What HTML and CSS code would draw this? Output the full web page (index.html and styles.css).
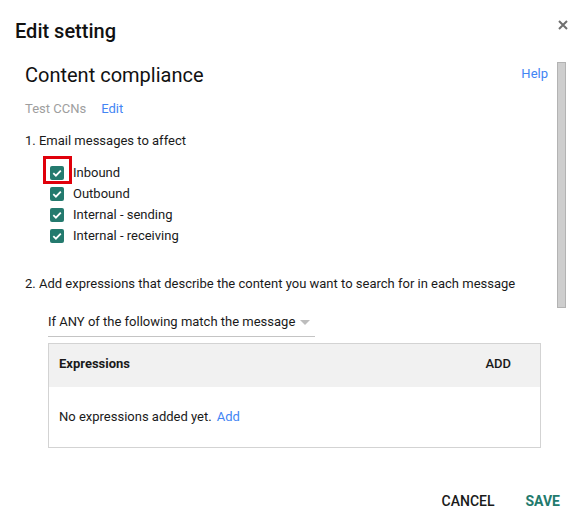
FILE: index.html
```html
<!DOCTYPE html>
<html>
<head>
<meta charset="utf-8">
<link rel="stylesheet" href="styles.css">
</head>
<body>
<div class="dialog">
  <div class="dlg-head">
    <h1 class="dlg-title">Edit setting</h1>
    <svg class="close" width="10" height="10" viewBox="0 0 10 10"><path d="M1 1 L9 9 M9 1 L1 9" stroke="#6f6f6f" stroke-width="2" fill="none"/></svg>
  </div>
  <div class="dlg-body">
    <div class="main">
      <div class="title-row">
        <h2 class="sub-title">Content compliance</h2>
        <a class="link help">Help</a>
      </div>
      <div class="meta"><span class="muted">Test CCNs</span><a class="link">Edit</a></div>
      <div class="section">1. Email messages to affect</div>
      <ul class="checks">
        <li class="check-row"><span class="cb highlighted"><svg width="14" height="14" viewBox="0 0 14 14"><path d="M3.3 7.2 L5.9 9.7 L10.8 4.6" stroke="#fff" stroke-width="1.8" fill="none"/></svg></span>Inbound</li>
        <li class="check-row"><span class="cb"><svg width="14" height="14" viewBox="0 0 14 14"><path d="M3.3 7.2 L5.9 9.7 L10.8 4.6" stroke="#fff" stroke-width="1.8" fill="none"/></svg></span>Outbound</li>
        <li class="check-row"><span class="cb"><svg width="14" height="14" viewBox="0 0 14 14"><path d="M3.3 7.2 L5.9 9.7 L10.8 4.6" stroke="#fff" stroke-width="1.8" fill="none"/></svg></span>Internal - sending</li>
        <li class="check-row"><span class="cb"><svg width="14" height="14" viewBox="0 0 14 14"><path d="M3.3 7.2 L5.9 9.7 L10.8 4.6" stroke="#fff" stroke-width="1.8" fill="none"/></svg></span>Internal - receiving</li>
      </ul>
      <div class="section second">2. Add expressions that describe the content you want to search for in each message</div>
      <div class="select"><span>If ANY of the following match the message</span><svg class="caret" width="10" height="5" viewBox="0 0 10 5"><path d="M0 0 L10 0 L5 5 Z" fill="#bdbdbd"/></svg></div>
      <div class="table">
        <div class="table-head"><span class="th">Expressions</span><span class="add-btn">ADD</span></div>
        <div class="table-body">No expressions added yet.<a class="link add-link">Add</a></div>
      </div>
    </div>
    <div class="thumb"></div>
  </div>
  <div class="dlg-foot">
    <span class="btn">CANCEL</span>
    <span class="btn primary">SAVE</span>
  </div>
</div>
</body>
</html>
```

FILE: styles.css
```css
*, *::before, *::after { box-sizing: border-box; }
html, body { margin: 0; padding: 0; background: #fff; }
body { font-family: Roboto, "Liberation Sans", Arial, sans-serif; color: #1a1a1a; }
.dialog { width: 584px; height: 520px; display: flex; flex-direction: column; background: #fff; }
.dlg-head { display: flex; justify-content: space-between; align-items: flex-start; padding: 19px 16px 0 15px; }
.dlg-title { margin: 0; font-size: 20px; line-height: 24px; font-weight: 500; color: #111; }
.close { margin-top: 1px; display: block; }
.dlg-body { display: flex; margin-top: 20px; margin-right: 18px; }
.main { flex: 1; padding: 0 9px 0 25px; min-width: 0; }
.thumb { width: 9px; height: 246px; margin-top: -1px; background: #cecece; border: 1px solid #b3b3b3; flex-shrink: 0; }
.title-row { display: flex; justify-content: space-between; align-items: flex-start; }
.sub-title { margin: 0; font-size: 20px; line-height: 24px; font-weight: 400; color: #111; }
.link { color: #4285f4; font-size: 13px; line-height: 20px; text-decoration: none; cursor: pointer; }
.help { margin-top: 1px; }
.meta { margin-top: 12px; font-size: 13px; line-height: 20px; display: flex; gap: 15px; }
.muted { color: #9e9e9e; }
.section { margin-top: 12px; font-size: 13px; line-height: 20px; }
.section.second { margin-top: 28px; }
.checks { list-style: none; margin: 11px 0 0 25px; padding: 0; }
.check-row { display: flex; align-items: center; height: 21px; font-size: 13px; line-height: 21px; }
.cb { position: relative; width: 14px; height: 14px; margin-right: 9px; background: #247a6e; border-radius: 2px; flex-shrink: 0; }
.cb svg { display: block; }
.cb.highlighted::after { content: ""; position: absolute; left: -7px; top: -10px; width: 29px; height: 28px; border: 3px solid #e0000b; }
.select { display: flex; align-items: center; width: 267px; margin: 18px 0 0 23px; padding-bottom: 4px; border-bottom: 1px solid #c4c4c4; font-size: 13px; line-height: 20px; }
.caret { margin-left: 5px; margin-top: 1px; display: block; }
.table { margin: 6px 7px 0 23px; border: 1px solid #d3d3d3; }
.table-head { display: flex; justify-content: space-between; align-items: baseline; background: #f1f1f1; height: 43px; padding: 10px 29px 0 10px; font-size: 13px; line-height: 20px; }
.th { font-weight: 700; }
.add-btn { font-weight: 500; font-size: 13px; }
.table-body { height: 60px; padding: 19.5px 10px 0; font-size: 13px; line-height: 20px; }
.add-link { margin-left: 5px; }
.dlg-foot { margin-top: auto; display: flex; justify-content: flex-end; gap: 31px; padding: 0 24px 9px 0; }
.btn { font-size: 14px; line-height: 20px; font-weight: 500; color: #1a1a1a; }
.btn.primary { color: #227a6d; font-weight: 700; }
```
